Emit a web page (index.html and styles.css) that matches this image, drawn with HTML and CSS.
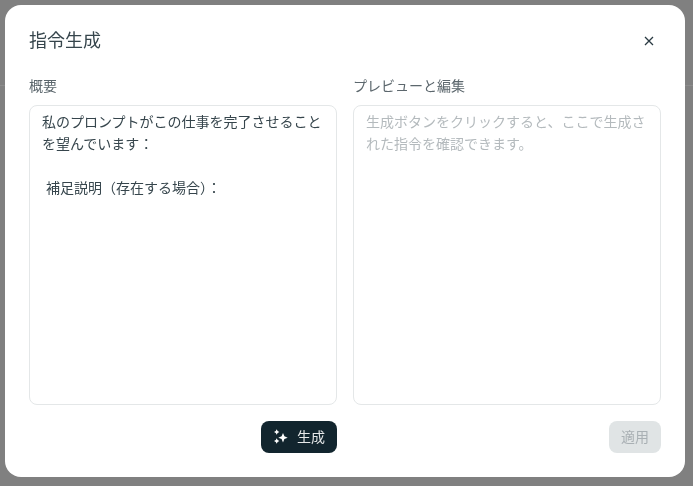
FILE: index.html
```html
<!DOCTYPE html>
<html lang="ja">
<head>
<meta charset="utf-8">
<title>指令生成</title>
<link rel="stylesheet" href="styles.css">
</head>
<body>
<div class="backdrop">
  <div class="bg-line"></div>
  <section class="modal">
    <header class="modal-head">
      <h1 class="modal-title">指令生成</h1>
      <button class="close" aria-label="閉じる">
        <svg width="16" height="16" viewBox="0 0 16 16" fill="none" stroke="#2a3a42" stroke-width="1.3"><path d="M4 4l8 8M12 4l-8 8"/></svg>
      </button>
    </header>
    <div class="columns">
      <div class="col">
        <label class="field-label">概要</label>
        <div class="box">
          <div class="box-text">私のプロンプトがこの仕事を完了させることを望んでいます：<br><br>&nbsp;補足説明（存在する場合）：</div>
        </div>
        <div class="actions">
          <button class="btn btn-primary">
            <svg width="16" height="16" viewBox="0 0 16 16" fill="#fff"><path d="M10 4l1.400 3.300 3.300 1.400-3.300 1.400L10 13.400 8.600 10.100 5.300 8.700l3.300-1.400z"/><path d="M3.700 .3l.9 1.800 1.800.9-1.800.9-.9 1.800-.9-1.800L1 3l1.800-.9z"/><path d="M3.700 9.300l.9 1.800 1.800.9-1.800.9-.9 1.800-.9-1.800L1 12l1.800-.9z"/></svg>
            <span>生成</span>
          </button>
        </div>
      </div>
      <div class="col">
        <label class="field-label">プレビューと編集</label>
        <div class="box">
          <div class="box-text placeholder">生成ボタンをクリックすると、ここで生成された指令を確認できます。</div>
        </div>
        <div class="actions">
          <button class="btn btn-disabled">適用</button>
        </div>
      </div>
    </div>
  </section>
</div>
</body>
</html>
```

FILE: styles.css
```css
* { box-sizing: border-box; }
html, body { margin: 0; height: 100%; }
body {
  font-family: "Inter", "Noto Sans CJK JP", sans-serif;
  color: #1b2b33;
  overflow: hidden;
}
.backdrop {
  position: relative;
  width: 693px;
  height: 486px;
  background: #808080;
  padding: 5px 8px 9px 5px;
}
.bg-line {
  position: absolute;
  left: 0;
  right: 0;
  top: 85px;
  height: 1px;
  background: #8c8c8c;
}
.modal {
  position: relative;
  width: 680px;
  height: 472px;
  background: #fff;
  border-radius: 16px;
  padding: 24px;
  display: flex;
  flex-direction: column;
  will-change: transform;
}
.modal-head {
  display: flex;
  justify-content: space-between;
  align-items: center;
  height: 24px;
  margin-bottom: 24px;
}
.modal-title {
  margin: 0;
  font-size: 18px;
  line-height: 24px;
  font-weight: 400;
  color: #36454c;
}
.close {
  border: 0;
  background: none;
  padding: 0;
  width: 16px;
  height: 16px;
  display: flex;
  margin-right: 4px;
}
.columns {
  display: flex;
  gap: 16px;
  flex: 1;
}
.col {
  flex: 1;
  display: flex;
  flex-direction: column;
  min-width: 0;
}
.field-label {
  font-size: 14px;
  line-height: 18px;
  height: 20px;
  margin-bottom: 8px;
  color: #5c676d;
}
.box {
  height: 300px;
  border: 1px solid #e4e7e8;
  border-radius: 8px;
  padding: 5px 12px;
}
.box-text {
  font-size: 14px;
  line-height: 22px;
  color: #36454c;
}
.placeholder { color: #b4babd; }
.actions {
  display: flex;
  justify-content: flex-end;
  margin-top: 16px;
}
.btn {
  height: 32px;
  border: 0;
  border-radius: 8px;
  font-family: inherit;
  font-size: 14px;
  padding: 0 12px 2px;
  display: inline-flex;
  align-items: center;
  gap: 8px;
}
.btn-primary { background: #12252e; color: #e6e8e9; }
.btn-primary svg { margin-top: 2px; }
.btn-disabled { background: #e0e4e5; color: #a9b0b4; }
```
